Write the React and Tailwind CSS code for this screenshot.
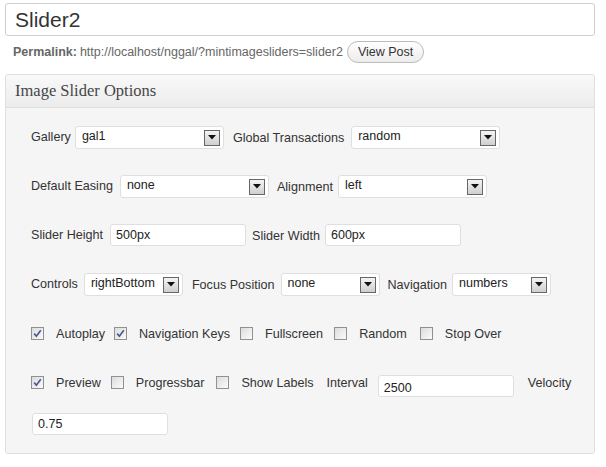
import React from "react";

const font = "font-['Liberation_Sans',Arial,sans-serif]";

function Select({ value, width }) {
  return (
    <div
      className={`relative flex h-[23px] shrink-0 items-center rounded-[3px] border border-[#dfdfdf] bg-white pl-[6px] text-[12.5px] text-[#222] ${width}`}
    >
      <span className="-mt-[2px]">{value}</span>
      <span className="absolute right-[3px] top-[3px] flex h-[16px] w-[16px] items-center justify-center border border-[#666] bg-gradient-to-b from-[#f4f4f4] to-[#cfcfcf]">
        <svg width="8" height="5" viewBox="0 0 8 5">
          <path d="M0 0h8L4 4.5z" fill="#111" />
        </svg>
      </span>
    </div>
  );
}

function TextInput({ value, width = "w-[136px]", extra = "" }) {
  return (
    <div
      className={`flex h-[22px] shrink-0 items-center rounded-[3px] border border-[#dfdfdf] bg-white pl-[5px] text-[12.5px] text-[#222] ${width} ${extra}`}
    >
      {value}
    </div>
  );
}

function Check({ checked }) {
  return (
    <span className="flex h-[13px] w-[13px] shrink-0 items-center justify-center border border-[#919191] bg-gradient-to-br from-[#dcdcdc] to-[#fbfbfb]">
      {checked && (
        <svg width="9" height="9" viewBox="0 0 9 9">
          <path d="M1.2 4.6 L3.4 7.2 L7.8 1.2" fill="none" stroke="#4a5c98" strokeWidth="1.7" />
        </svg>
      )}
    </span>
  );
}

function Label({ children }) {
  return <span className="shrink-0 whitespace-nowrap text-[12.6px] text-[#333]">{children}</span>;
}

export default function App() {
  return (
    <div className={`h-[467px] w-[606px] bg-white pl-[5px] pr-[11px] pt-[3px] ${font}`}>
      {/* title */}
      <div className="flex h-[33px] items-center rounded-[3px] border border-[#cfcfcf] bg-white pl-[9px] text-[21px] text-[#333]">
        Slider2
      </div>

      {/* permalink */}
      <div className="mt-[5px] flex items-center pl-[8px] text-[12.5px] text-[#666]">
        <span className="font-bold">Permalink:</span>
        <span className="ml-[3px]">http://localhost/nggal/?mintimagesliders=slider2</span>
        <span className="ml-[4px] flex h-[22px] items-center rounded-full border border-[#bbb] bg-gradient-to-b from-white to-[#ececec] px-[10px] text-[12.5px] text-[#333]">
          View Post
        </span>
      </div>

      {/* panel */}
      <div className="mt-[11px] overflow-hidden rounded-[3px] border border-[#dfdfdf] bg-[#f5f5f5]">
        <div className="flex h-[33px] items-center border-b border-[#dfdfdf] bg-gradient-to-b from-[#f9f9f9] to-[#ececec] pl-[9px] font-['Liberation_Serif',Georgia,serif] text-[16.5px] text-[#464646]">
          Image Slider Options
        </div>

        <div className="flex flex-col gap-[25px] pb-[24px] pl-[25px] pt-[17px]">
          <div className="flex h-[24px] items-center">
            <Label>Gallery</Label>
            <div className="ml-[4px]"><Select value="gal1" width="w-[149px]" /></div>
            <span className="ml-[9px]"><Label>Global Transactions</Label></span>
            <div className="ml-[7px]"><Select value="random" width="w-[149px]" /></div>
          </div>

          <div className="flex h-[24px] items-center">
            <Label>Default Easing</Label>
            <div className="ml-[7px]"><Select value="none" width="w-[149px]" /></div>
            <span className="ml-[8px]"><Label>Alignment</Label></span>
            <div className="ml-[5px]"><Select value="left" width="w-[149px]" /></div>
          </div>

          <div className="flex h-[24px] items-center">
            <Label>Slider Height</Label>
            <div className="ml-[7px]"><TextInput value="500px" /></div>
            <span className="ml-[6px]"><Label>Slider Width</Label></span>
            <div className="ml-[5px]"><TextInput value="600px" /></div>
          </div>

          <div className="flex h-[24px] items-center">
            <Label>Controls</Label>
            <div className="ml-[6px]"><Select value="rightBottom" width="w-[99px]" /></div>
            <span className="ml-[9px]"><Label>Focus Position</Label></span>
            <div className="ml-[6px]"><Select value="none" width="w-[99px]" /></div>
            <span className="ml-[8px]"><Label>Navigation</Label></span>
            <div className="ml-[5px]"><Select value="numbers" width="w-[99px]" /></div>
          </div>

          <div className="flex h-[24px] items-center">
            <Check checked />
            <span className="ml-[12px]"><Label>Autoplay</Label></span>
            <span className="ml-[9px]"><Check checked /></span>
            <span className="ml-[12px]"><Label>Navigation Keys</Label></span>
            <span className="ml-[10px]"><Check /></span>
            <span className="ml-[12px]"><Label>Fullscreen</Label></span>
            <span className="ml-[11px]"><Check /></span>
            <span className="ml-[12px]"><Label>Random</Label></span>
            <span className="ml-[13px]"><Check /></span>
            <span className="ml-[12px]"><Label>Stop Over</Label></span>
          </div>

          <div className="-mb-[6px] flex flex-col gap-[19px]">
            <div className="flex h-[24px] items-center">
              <Check checked />
              <span className="ml-[12px]"><Label>Preview</Label></span>
              <span className="ml-[10px]"><Check /></span>
              <span className="ml-[12px]"><Label>Progressbar</Label></span>
              <span className="ml-[12px]"><Check /></span>
              <span className="ml-[12px]"><Label>Show Labels</Label></span>
              <span className="ml-[13px]"><Label>Interval</Label></span>
              <TextInput value="2500" extra="ml-[10px] mt-[8px] pt-[4px]" width="w-[136px]" />
              <span className="ml-[14px]"><Label>Velocity</Label></span>
            </div>
            <div className="ml-[1px] flex">
              <TextInput value="0.75" />
            </div>
          </div>
        </div>
      </div>
    </div>
  );
}
